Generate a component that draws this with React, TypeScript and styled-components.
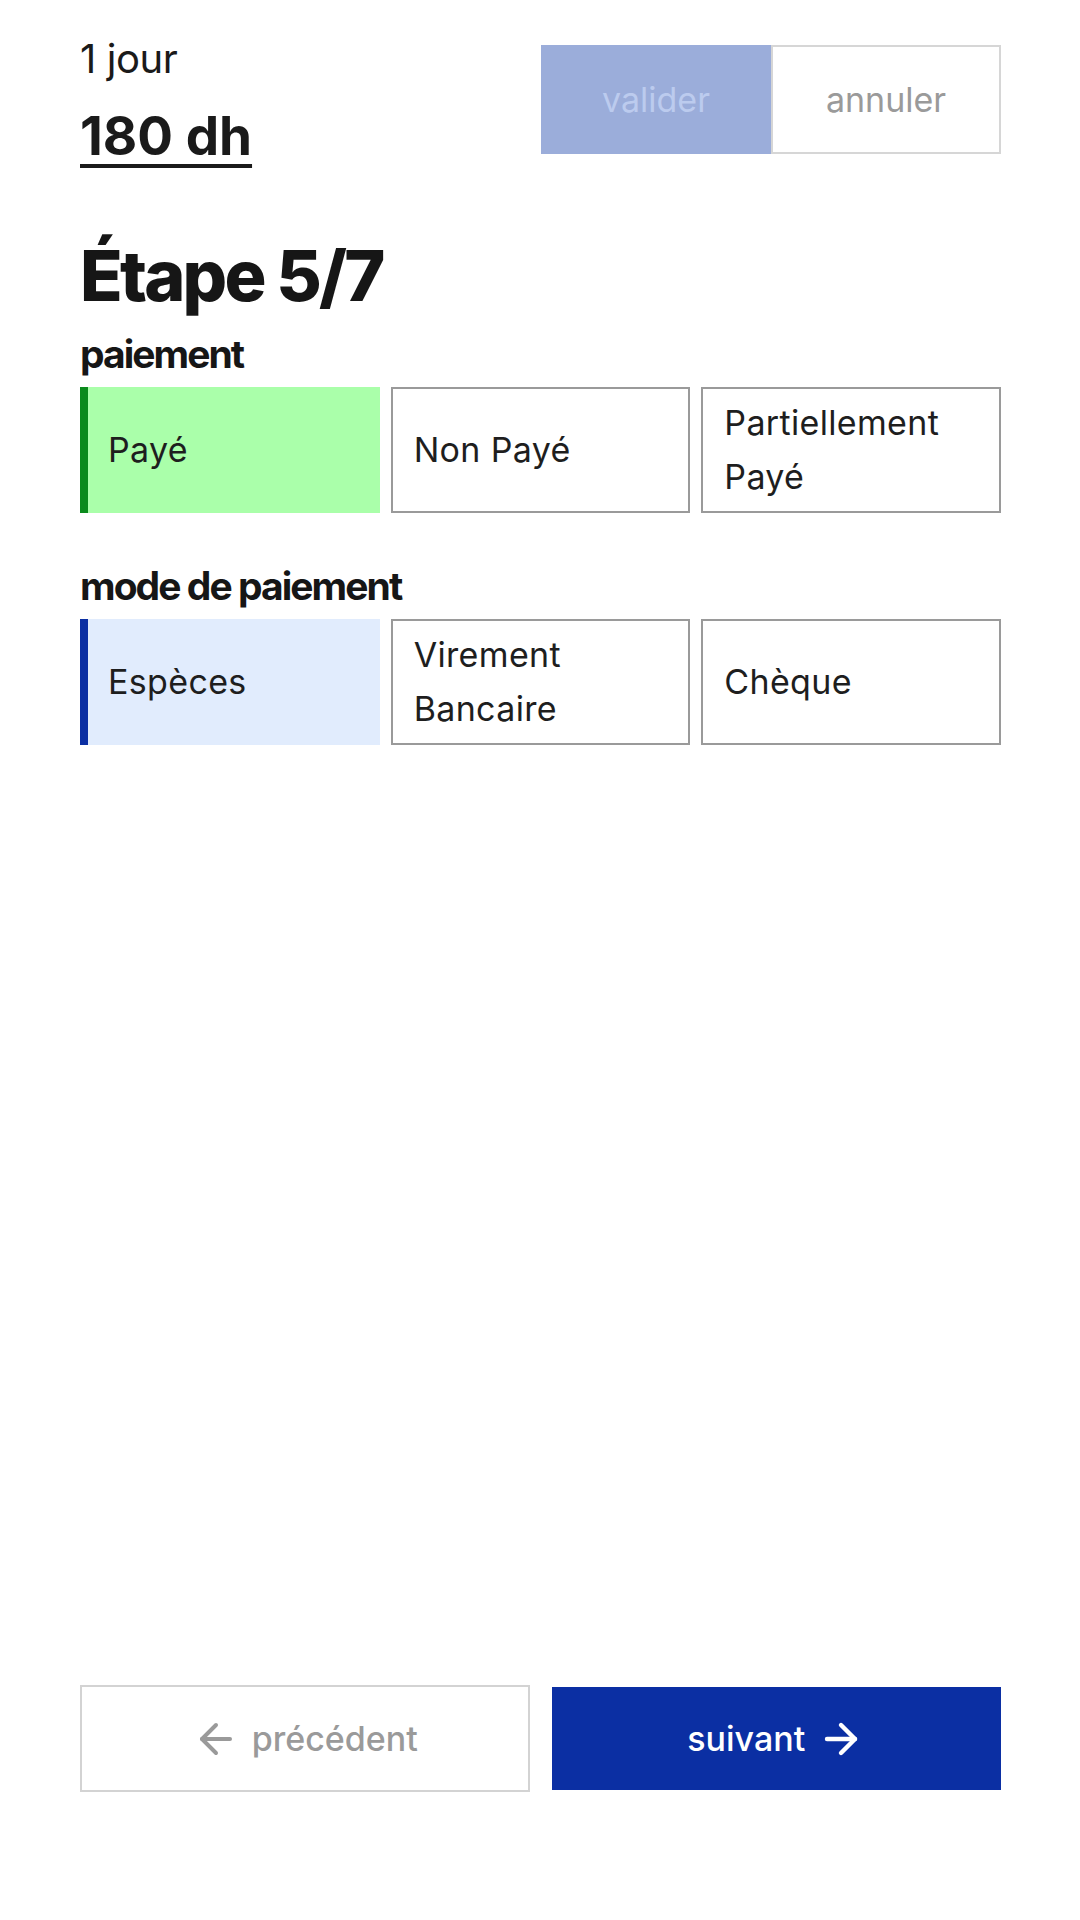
import { ArrowLeft, ArrowRight } from "lucide-react";
import styled, { createGlobalStyle } from "styled-components";

const GlobalStyle = createGlobalStyle`
  body {
    margin: 0;
    background: #fff;
    font-family: Inter, "Noto Sans", Arial, sans-serif;
    color: #1a1a1a;
  }
  * { box-sizing: border-box; }
`;

/* --- Styles --- */
const Page = styled.div`
  min-height: 1920px;
  padding: 32px 79px 128px 80px;
  display: flex;
  flex-direction: column;
`;
const Header = styled.header`
  display: flex;
  justify-content: space-between;
  align-items: flex-start;
`;
const Duration = styled.p`
  margin: 0;
  font-size: 40px;
  line-height: 54px;
  letter-spacing: -0.01em;
`;
const Price = styled.p`
  margin: 20px 0 0;
  font-size: 53px;
  line-height: 60px;
  font-weight: 700;
  text-decoration: underline;
  text-decoration-thickness: 4px;
  text-underline-offset: 9px;
`;
const ActionGroup = styled.div`
  display: flex;
  margin-top: 13px;
`;
const ActionButton = styled.button<{ $primary?: boolean }>`
  width: 230px;
  height: 109px;
  font-family: inherit;
  font-size: 34px;
  border: ${(p) => (p.$primary ? "none" : "2px solid #d6d6d6")};
  background: ${(p) => (p.$primary ? "#9badda" : "#fff")};
  color: ${(p) => (p.$primary ? "#bccbee" : "#9a9a9a")};
`;
const Title = styled.h1`
  margin: 72px 0 0;
  font-size: 70px;
  line-height: 76px;
  font-weight: 800;
  letter-spacing: -0.04em;
  color: #161616;
`;
const Section = styled.section<{ $first?: boolean }>`
  margin-top: ${(p) => (p.$first ? "18px" : "51px")};
`;
const Label = styled.h2`
  margin: 0 0 11px;
  font-size: 39px;
  line-height: 44px;
  font-weight: 700;
  letter-spacing: -0.05em;
  color: #161616;
`;
const Options = styled.div`
  display: grid;
  grid-template-columns: repeat(3, 1fr);
  gap: 11px;
`;
const Option = styled.div<{ $selected?: string; $bg?: string }>`
  height: 126px;
  display: flex;
  align-items: center;
  padding: 0 14px 0 21px;
  font-size: 34px;
  line-height: 54px;
  letter-spacing: 0.01em;
  color: #1e1e1e;
  border: 2px solid #9a9a9a;
  ${(p) =>
    p.$selected &&
    `
    border: none;
    border-left: 8px solid ${p.$selected};
    background: ${p.$bg};
    padding-left: 20px;
  `}
`;
const Footer = styled.footer`
  margin-top: auto;
  display: grid;
  grid-template-columns: 1fr 1fr;
  gap: 22px;
  align-items: center;
`;
const NavButton = styled.button<{ $primary?: boolean }>`
  height: ${(p) => (p.$primary ? "103px" : "107px")};
  display: flex;
  align-items: center;
  justify-content: center;
  gap: 12px;
  font-family: inherit;
  font-size: ${(p) => (p.$primary ? "34px" : "34px")};
  font-weight: 500;
  border: ${(p) => (p.$primary ? "none" : "2px solid #d3d3d3")};
  background: ${(p) => (p.$primary ? "#0b2fa3" : "#fff")};
  color: ${(p) => (p.$primary ? "#fff" : "#9a9a9a")};
`;

const paymentStatus = ["Payé", "Non Payé", "Partiellement Payé"];
const paymentModes = ["Espèces", "Virement Bancaire", "Chèque"];

export default function App() {
  return (
    <>
      <GlobalStyle />
      <Page>
        <Header>
          <div>
            <Duration>1 jour</Duration>
            <Price>180 dh</Price>
          </div>
          <ActionGroup>
            <ActionButton $primary>valider</ActionButton>
            <ActionButton>annuler</ActionButton>
          </ActionGroup>
        </Header>

        <Title>Étape 5/7</Title>

        <Section $first>
          <Label>paiement</Label>
          <Options>
            {paymentStatus.map((s, i) => (
              <Option
                key={s}
                $selected={i === 0 ? "#0a8a1c" : undefined}
                $bg="#aaffaa"
              >
                {s}
              </Option>
            ))}
          </Options>
        </Section>

        <Section>
          <Label>mode de paiement</Label>
          <Options>
            {paymentModes.map((m, i) => (
              <Option
                key={m}
                $selected={i === 0 ? "#0b2fa3" : undefined}
                $bg="#e1ecfd"
              >
                {m}
              </Option>
            ))}
          </Options>
        </Section>

        <Footer>
          <NavButton>
            <ArrowLeft size={48} strokeWidth={2} />
            précédent
          </NavButton>
          <NavButton $primary>
            suivant
            <ArrowRight size={48} strokeWidth={2.2} />
          </NavButton>
        </Footer>
      </Page>
    </>
  );
}
